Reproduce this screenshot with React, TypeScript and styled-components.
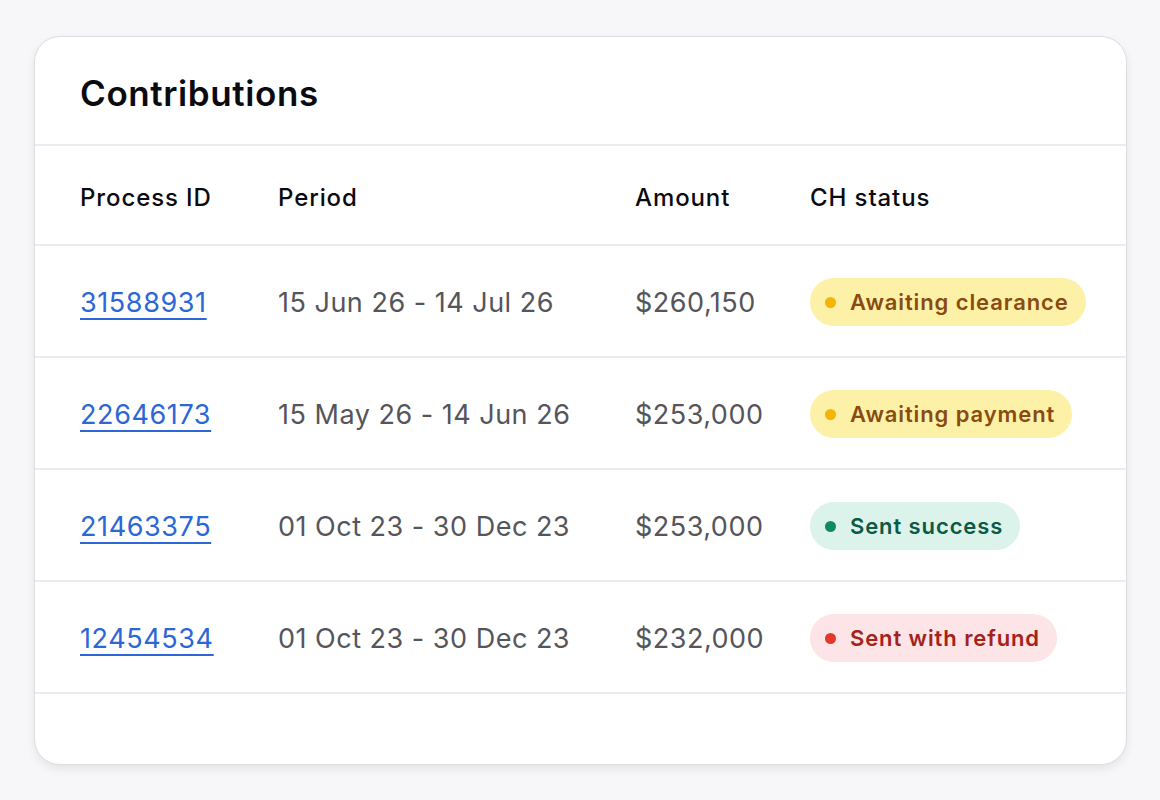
import React from "react";
import styled, { createGlobalStyle } from "styled-components";

const Global = createGlobalStyle`
  body { margin: 0; background: #f7f6f9; font-family: Inter, "Noto Sans", sans-serif; }
`;

type Tone = "yellow" | "green" | "red";

const tones: Record<Tone, { bg: string; fg: string; dot: string }> = {
  yellow: { bg: "#fdf1a8", fg: "#8a4b12", dot: "#f5b400" },
  green: { bg: "#dcf3ec", fg: "#0b5a45", dot: "#0f8a66" },
  red: { bg: "#fde4e6", fg: "#a3231b", dot: "#e5372b" },
};

const rows = [
  { id: "31588931", period: "15 Jun 26 - 14 Jul 26", amount: "$260,150", status: "Awaiting clearance", tone: "yellow" as Tone },
  { id: "22646173", period: "15 May 26 - 14 Jun 26", amount: "$253,000", status: "Awaiting payment", tone: "yellow" as Tone },
  { id: "21463375", period: "01 Oct 23 - 30 Dec 23", amount: "$253,000", status: "Sent success", tone: "green" as Tone },
  { id: "12454534", period: "01 Oct 23 - 30 Dec 23", amount: "$232,000", status: "Sent with refund", tone: "red" as Tone },
];

export default function App() {
  return (
    <Page>
      <Global />
      <Card>
        <Title>Contributions</Title>
        <HeadRow>
          <span>Process ID</span>
          <span>Period</span>
          <span>Amount</span>
          <span>CH status</span>
        </HeadRow>
        {rows.map((r) => (
          <Row key={r.id}>
            <IdLink href="#">{r.id}</IdLink>
            <Cell>{r.period}</Cell>
            <Cell>{r.amount}</Cell>
            <div>
              <Badge $tone={r.tone}>
                <Dot $tone={r.tone} />
                {r.status}
              </Badge>
            </div>
          </Row>
        ))}
        <Footer />
      </Card>
    </Page>
  );
}

const Page = styled.div`
  padding: 36px 33px 35px 34px;
`;

const Card = styled.div`
  background: #fff;
  border: 1px solid #dedde2;
  border-radius: 26px;
  box-shadow: 0 4px 10px rgba(0, 0, 0, 0.08);
  overflow: hidden;
`;

const Title = styled.h1`
  margin: 0;
  height: 109px;
  box-sizing: border-box;
  padding: 35px 45px 0;
  font-size: 35px;
  font-weight: 600;
  letter-spacing: 0.6px;
  color: #0b0b0f;
  border-bottom: 2px solid #ececf0;
`;

const grid = `
  display: grid;
  grid-template-columns: 198px 357px 175px 1fr;
  align-items: center;
  padding-left: 45px;
  border-bottom: 2px solid #ececf0;
`;

const HeadRow = styled.div`
  ${grid}
  height: 100px;
  padding-top: 4px;
  box-sizing: border-box;
  font-size: 24px;
  font-weight: 500;
  letter-spacing: 0.9px;
  color: #0b0b0f;
`;

const Row = styled.div`
  ${grid}
  height: 112px;
  padding-top: 2px;
  box-sizing: border-box;
`;

const IdLink = styled.a`
  font-size: 27px;
  letter-spacing: 0.6px;
  color: #2d66d6;
  text-decoration: underline;
  text-underline-offset: 6px;
  text-decoration-thickness: 2px;
`;

const Cell = styled.span`
  font-size: 27px;
  letter-spacing: 0.5px;
  color: #55555c;
`;

const Badge = styled.span<{ $tone: Tone }>`
  display: inline-flex;
  align-items: center;
  gap: 14px;
  height: 48px;
  padding: 0 17px 0 15px;
  border-radius: 24px;
  background: ${(p) => tones[p.$tone].bg};
  color: ${(p) => tones[p.$tone].fg};
  font-size: 22px;
  font-weight: 600;
  letter-spacing: 0.9px;
`;

const Dot = styled.span<{ $tone: Tone }>`
  width: 11px;
  height: 11px;
  border-radius: 50%;
  background: ${(p) => tones[p.$tone].dot};
`;

const Footer = styled.div`
  height: 70px;
`;
